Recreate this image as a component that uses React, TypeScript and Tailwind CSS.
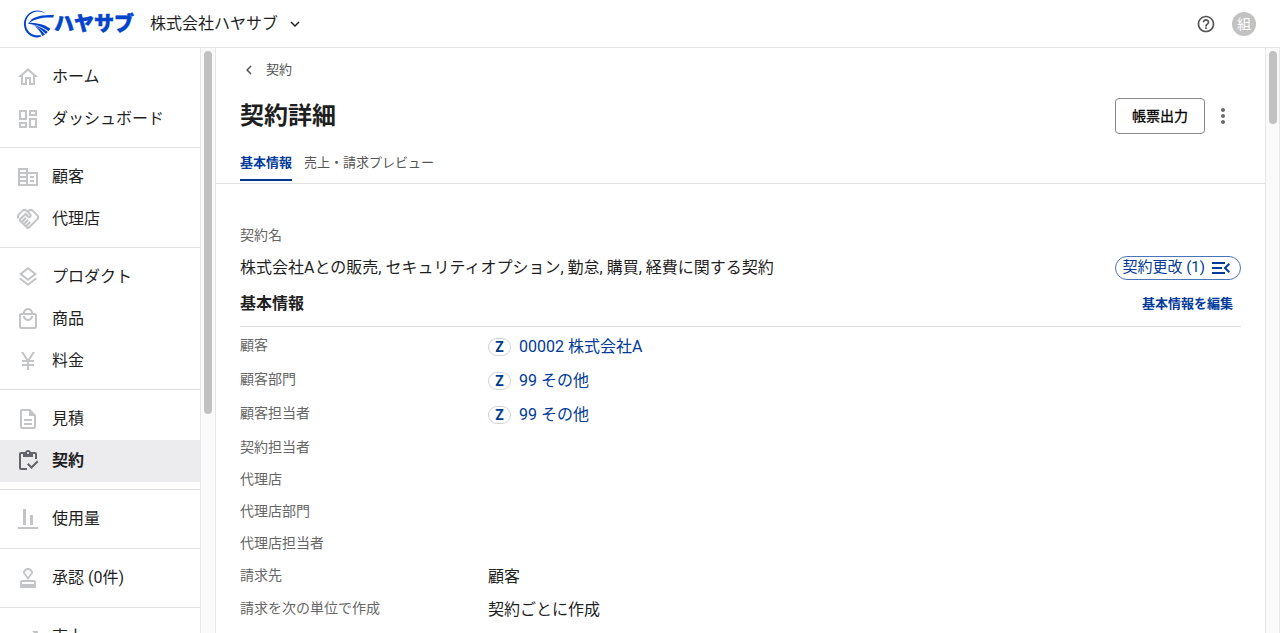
import type { ComponentType, ReactNode } from "react";
import {
  MdOutlineHome,
  MdOutlineDashboard,
  MdOutlineHandshake,
  MdOutlineLayers,
  MdOutlineLocalMall,
  MdCurrencyYen,
  MdOutlineDescription,
  MdOutlineInventory,
  MdOutlineAlignVerticalBottom,
  MdOutlineApproval,
  MdTrendingUp,
  MdHelpOutline,
  MdKeyboardArrowDown,
  MdKeyboardArrowLeft,
  MdMoreVert,
  MdMenuOpen,
} from "react-icons/md";

type NavItem = {
  label: string;
  icon: ComponentType<{ className?: string }>;
  active?: boolean;
};

function BuildingIcon({ className }: { className?: string }) {
  return (
    <svg viewBox="0 0 24 24" fill="currentColor" className={className} aria-hidden="true">
      <path
        fillRule="evenodd"
        d="M12 7V3H2v18h20V7zM10 19H4v-2h6zm0-4H4v-2h6zm0-4H4V9h6zm0-4H4V5h6zm10 12h-8V9h8zm-2-8h-4v2h4zm0 4h-4v2h4z"
      />
    </svg>
  );
}

const navGroups: NavItem[][] = [
  [
    { label: "ホーム", icon: MdOutlineHome },
    { label: "ダッシュボード", icon: MdOutlineDashboard },
  ],
  [
    { label: "顧客", icon: BuildingIcon },
    { label: "代理店", icon: MdOutlineHandshake },
  ],
  [
    { label: "プロダクト", icon: MdOutlineLayers },
    { label: "商品", icon: MdOutlineLocalMall },
    { label: "料金", icon: MdCurrencyYen },
  ],
  [
    { label: "見積", icon: MdOutlineDescription },
    { label: "契約", icon: MdOutlineInventory, active: true },
  ],
  [{ label: "使用量", icon: MdOutlineAlignVerticalBottom }],
  [{ label: "承認 (0件)", icon: MdOutlineApproval }],
  [{ label: "売上", icon: MdTrendingUp }],
];

function LogoMark() {
  return (
    <svg viewBox="0 0 32 30" className="h-[30px] w-8 shrink-0" aria-hidden="true">
      <path
        d="M23.6 4.6C20.4 1.6 15.6 0.6 11.4 2C5.4 4 1.5 9.8 2 16.2C2.6 23.4 8.6 28.6 15.6 28.4C17 28.3 18.2 28.1 19.2 27.6L18.4 26C12 27.6 5.6 23.6 4.2 17.4C2.8 11 6.2 5.2 11.8 3.2C15.8 1.8 20 2.6 23.6 4.6Z"
        fill="#0044cc"
      />
      <path d="M6.4 14.6C9.6 8.2 17.4 5.4 32 6L31.2 8.6C20.6 8.2 12.6 9.8 6.4 14.6Z" fill="#0044cc" />
      <path d="M6.4 13.8C14 13.8 22.4 15.2 28.4 19.8L26.4 22.2C20.4 17.6 14 15.8 6.4 14.8Z" fill="#0044cc" />
      <path d="M10 15.4C16.4 16.8 21.8 19.2 25.8 23L23.8 25C20 20.6 15.4 17.6 10 15.4Z" fill="#0044cc" />
      <path d="M12.4 17C16.8 19 20.4 21.8 23 25.6L20.2 27C18.6 22.8 16 19.8 12.4 17Z" fill="#0044cc" />
    </svg>
  );
}

function ScrollBar({ className, thumb }: { className: string; thumb: string }) {
  return (
    <div aria-hidden="true" className={`flex shrink-0 justify-center border-x border-[#e6e6e6] bg-[#fafafa] pt-[3px] ${className}`}>
      <div className={`w-2 rounded-full bg-[#c1c1c1] ${thumb}`} />
    </div>
  );
}

function Header() {
  return (
    <header className="flex h-12 shrink-0 items-center justify-between border-b border-[#e4e4e4] pr-6 pl-[22px]">
      <div className="flex items-center gap-4">
        <a href="#" className="flex items-center text-xl leading-none font-black text-[#0044cc]">
          <LogoMark />
          <span className="[-webkit-text-stroke:0.5px_#0044cc]">ハヤサブ</span>
        </a>
        <button type="button" className="flex items-center gap-2 text-base">
          株式会社ハヤサブ
          <MdKeyboardArrowDown className="size-[18px]" />
        </button>
      </div>
      <div className="flex items-center gap-4">
        <button type="button" aria-label="ヘルプ">
          <MdHelpOutline className="size-5 text-[#555]" />
        </button>
        <button type="button" className="flex size-6 items-center justify-center rounded-full bg-[#c2c2c2] text-sm leading-none text-white">
          組
        </button>
      </div>
    </header>
  );
}

function Sidebar() {
  return (
    <nav className="w-[200px] shrink-0 overflow-hidden">
      {navGroups.map((group) => (
        <ul
          key={group[0].label}
          className={`border-b border-[#e0e0e0] pt-2 ${group.length > 1 ? "pb-[7px]" : "pb-2"}`}
        >
          {group.map(({ label, icon: Icon, active }) => (
            <li key={label}>
              <a
                href="#"
                aria-current={active ? "page" : undefined}
                className={`flex h-[42px] items-center gap-3 px-4 text-base ${active ? "bg-[#ececee] font-bold" : ""}`}
              >
                <Icon className={`size-6 ${active ? "text-[#63656b]" : "text-[#c2c4c6]"}`} />
                {label}
              </a>
            </li>
          ))}
        </ul>
      ))}
    </nav>
  );
}

function CodeLink({ children }: { children: ReactNode }) {
  return (
    <span className="flex items-center gap-2">
      <span className="flex h-[18px] w-[23px] items-center justify-center rounded-full border border-[#d0d4d8] text-sm leading-none font-bold text-[#003a8c]">
        Z
      </span>
      <a href="#" className="text-base text-[#003a9b]">
        {children}
      </a>
    </span>
  );
}

const details: { label: string; value?: ReactNode; height: string }[] = [
  { label: "顧客", value: <CodeLink>00002 株式会社A</CodeLink>, height: "h-[34px]" },
  { label: "顧客部門", value: <CodeLink>99 その他</CodeLink>, height: "h-[34px]" },
  { label: "顧客担当者", value: <CodeLink>99 その他</CodeLink>, height: "h-[34px]" },
  { label: "契約担当者", height: "h-8" },
  { label: "代理店", height: "h-8" },
  { label: "代理店部門", height: "h-8" },
  { label: "代理店担当者", height: "h-8" },
  { label: "請求先", value: "顧客", height: "h-[33px]" },
  { label: "請求を次の単位で作成", value: "契約ごとに作成", height: "h-[33px]" },
];

function ContractDetail() {
  return (
    <main className="min-w-0 flex-1 overflow-hidden">
      <div className="border-b border-[#e0e0e0] px-6 pt-3">
        <a href="#" className="flex h-5 w-fit items-center gap-2 text-[13px] text-[#555]">
          <MdKeyboardArrowLeft className="size-[18px]" />
          契約
        </a>
        <div className="mt-[18px] flex h-9 items-center justify-between pr-1.5">
          <h1 className="text-2xl font-bold">契約詳細</h1>
          <div className="flex items-center gap-1.5">
            <button
              type="button"
              className="flex h-9 w-[90px] items-center justify-center rounded border border-[#888] text-sm text-black [-webkit-text-stroke:0.3px_#000]"
            >
              帳票出力
            </button>
            <button type="button" aria-label="その他の操作">
              <MdMoreVert className="size-6 text-[#6b6b6b]" />
            </button>
          </div>
        </div>
        <div role="tablist" className="mt-3 flex gap-3 pb-0.5 text-[13px]">
          <button role="tab" type="button" aria-selected="true" className="h-[35px] border-b-2 border-[#003a8c] font-bold text-[#003a9b]">
            基本情報
          </button>
          <button role="tab" type="button" aria-selected="false" className="h-[35px] border-b-2 border-transparent text-[#555]">
            売上・請求プレビュー
          </button>
        </div>
      </div>
      <div className="px-6 pt-[41px]">
        <p className="text-sm text-[#666]">契約名</p>
        <div className="mt-2 flex h-[29px] items-center justify-between">
          <p className="text-base">株式会社Aとの販売, セキュリティオプション, 勤怠, 購買, 経費に関する契約</p>
          <button type="button" className="flex h-6 items-center gap-1 rounded-full border border-[#4a74b8] pr-[7px] pl-1.5 text-[15px] text-[#003a9b]">
            契約更改 (1)
            <MdMenuOpen className="size-6" />
          </button>
        </div>
        <div className="mt-1 flex h-[41px] items-center justify-between border-b border-[#e0e0e0] pr-2 pb-1">
          <h2 className="text-base font-bold">基本情報</h2>
          <a href="#" className="text-[13px] font-bold text-[#003a9b]">
            基本情報を編集
          </a>
        </div>
        <dl className="pt-[3px]">
          {details.map(({ label, value, height }) => (
            <div key={label} className={`flex ${height}`}>
              <dt className="w-[248px] shrink-0 pt-[5px] text-sm text-[#666]">{label}</dt>
              <dd className="flex items-center text-base">{value}</dd>
            </div>
          ))}
        </dl>
      </div>
    </main>
  );
}

export default function App() {
  return (
    <div className="flex h-screen flex-col overflow-hidden bg-white font-[Roboto,'Noto_Sans_CJK_JP',sans-serif] text-[#1f1f1f]" lang="ja">
      <Header />
      <div className="flex min-h-0 flex-1">
        <Sidebar />
        <ScrollBar className="w-4" thumb="h-[363px]" />
        <ContractDetail />
        <ScrollBar className="w-[15px]" thumb="h-[73px]" />
      </div>
    </div>
  );
}
